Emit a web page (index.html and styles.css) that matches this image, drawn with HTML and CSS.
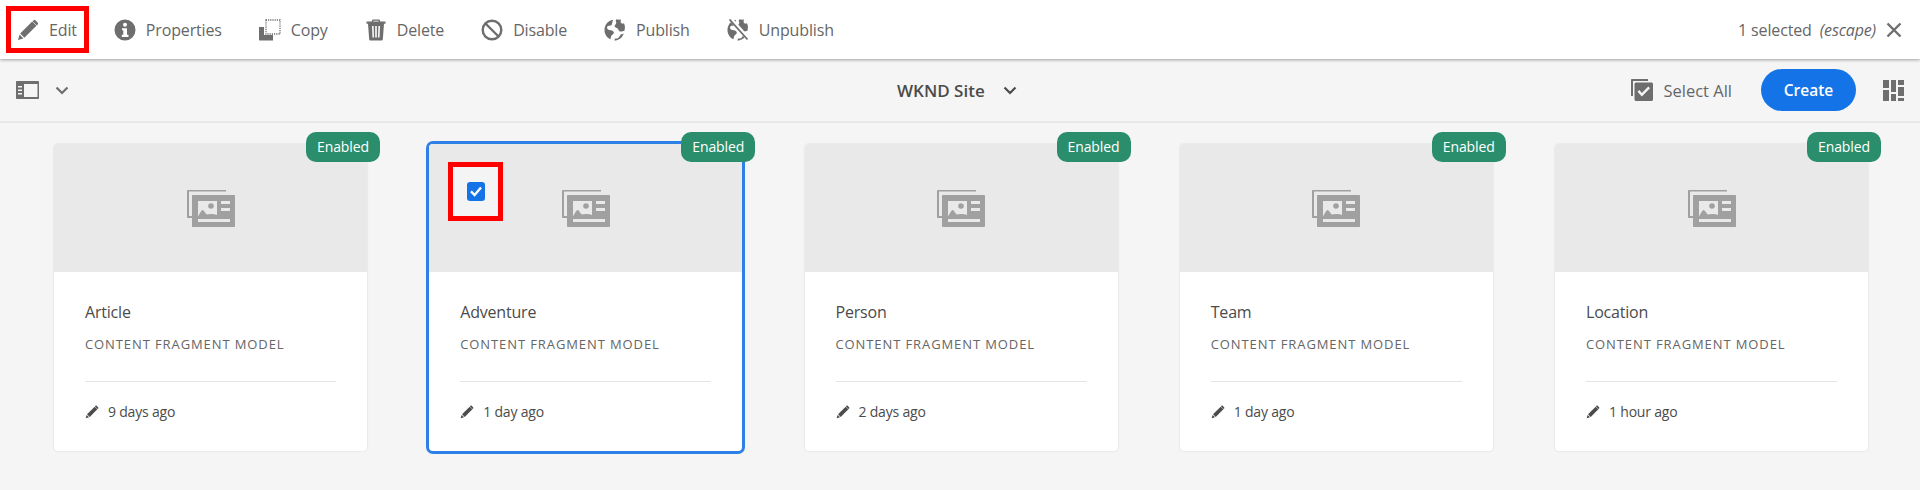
FILE: index.html
```html
<!DOCTYPE html>
<html lang="en">
<head>
    <meta charset="UTF-8">
    <title>Content Fragment Models</title>
    <link rel="stylesheet" href="styles.css">
</head>
<body>
    <svg class="defs" width="0" height="0">
        <symbol id="pencil" viewBox="0 0 22 22">
            <path d="M15.2 2.6 19.4 6.8 7.4 18.8 3.2 14.6Z"/>
            <path d="M16.3 1.5c.7-.7 1.7-.7 2.3-.1l2 2c.6.6.6 1.6-.1 2.3l-.7.7-4.2-4.2Z"/>
            <path d="M2.6 15.6 6.400 19.400 1 21Z"/>
        </symbol>
        <symbol id="card-image" viewBox="0 0 48 37">
            <path d="M1 0H39V1.600H2V26H5V28H1C.4 28 0 27.600 0 27V1C0 .4.4 0 1 0Z"/>
            <path fill-rule="evenodd" d="M6 5H47C47.600 5 48 5.400 48 6V36C48 36.600 47.600 37 47 37H6C5.400 37 5 36.600 5 36V6C5 5.400 5.400 5 6 5ZM11 11V26.500C13 23 14.500 20 15.500 20C17 20 18 23 20 24.500C23 23.500 27 24 30 25V11ZM34 11V14H43V11ZM34 18V21H43V18ZM11 29V32H43V29Z"/>
            <circle cx="24" cy="16" r="2.800" fill="#a0a0a0"/>
        </symbol>
    </svg>

    <div class="action-bar">
        <div class="actions">
            <div class="action action-edit">
                <svg class="icon"><use href="#pencil"/></svg>
                <span>Edit</span>
                <div class="red-box"></div>
            </div>
            <div class="action">
                <svg class="icon" viewBox="0 0 22 22"><path fill-rule="evenodd" d="M11 .5a10.500 10.500 0 1 0 0 21 10.500 10.500 0 0 0 0-21ZM11 3.800a2 2 0 1 1 0 4 2 2 0 0 1 0-4ZM8 9.200H13V15.800H14.500V18H7.800V15.800H9.300V11.200H8Z"/></svg>
                <span>Properties</span>
            </div>
            <div class="action">
                <svg class="icon" viewBox="0 0 22 22">
                    <path d="M0 8H5V16H14V21.500H1C.4 21.500 0 21.100 0 20.500Z"/>
                    <path d="M7 1V15H21V1Z" fill="none" stroke="#6e6e6e" stroke-width="1.300" stroke-dasharray="1.200 1"/>
                </svg>
                <span>Copy</span>
            </div>
            <div class="action">
                <svg class="icon" viewBox="0 0 22 22"><path fill-rule="evenodd" d="M7.500.5H14.500L15.300 2.500H20.500V4.800H19L17.800 20.500C17.700 21.200 17.300 21.500 16.700 21.500H5.300C4.700 21.500 4.300 21.200 4.200 20.500L3 4.800H1.500V2.500H6.700ZM8.500 1.800 8.200 2.500H13.800L13.500 1.800ZM7 7 7.500 18.500H9L8.600 7ZM10.200 7V18.500H11.800V7ZM13.400 7 13 18.500H14.500L15 7Z"/></svg>
                <span>Delete</span>
            </div>
            <div class="action">
                <svg class="icon" viewBox="0 0 22 22"><circle cx="11" cy="11" r="9.300" fill="none" stroke="#6e6e6e" stroke-width="2.400"/><path d="M4.500 4.500 17.500 17.500" stroke="#6e6e6e" stroke-width="2.400"/></svg>
                <span>Disable</span>
            </div>
            <div class="action">
                <svg class="icon" viewBox="0 0 22 22"><path d="M9 .8C4 1.700.5 6 .5 11c0 4 2.300 7.600 5.800 9.300.7-1.300.5-2.700 1.200-3.800.7-1.100 2-1.300 2.300-2.600.2-1.200-.8-2-1.800-2.500C6.500 10.900 4.500 11.300 3.500 10 2.800 9 3 7.800 3.900 7.100 5 6.300 6.300 6.900 7.300 6.200 8.500 5.300 7.800 3.800 8.500 2.700ZM12 .6c-.7 1.200.5 2.300.2 3.600-.2 1.200-1.700 1.700-1.600 3 .1 1.400 2 1.300 3 2.200 1 .9 1.100 2.500 2.400 3 1.500.5 3-.5 4.300-.5.9-2.500.9-5.200-.3-7.700-1.200.8-2.700.5-3.200-.7-.5-1 .2-1.900.1-2.900C15.500 .9 13.800 .5 12 .6ZM19.700 14.700c-1.100-.1-2.300.2-3.100 1-1.200 1-1.300 2.900-2.700 3.500-.9.4-1.800.1-2.700.2-.5.500-.7 1.200-.7 2.100 3.900 0 7.500-2.300 9.200-6.800Z"/></svg>
                <span>Publish</span>
            </div>
            <div class="action">
                <svg class="icon" viewBox="0 0 22 22">
                    <path d="M9 .8C4 1.700.5 6 .5 11c0 4 2.300 7.600 5.800 9.300.7-1.300.5-2.700 1.200-3.800.7-1.100 2-1.300 2.300-2.600.2-1.200-.8-2-1.800-2.500C6.500 10.900 4.500 11.300 3.500 10 2.800 9 3 7.800 3.900 7.100 5 6.300 6.300 6.900 7.300 6.200 8.500 5.300 7.800 3.800 8.500 2.700ZM12 .6c-.7 1.200.5 2.300.2 3.600-.2 1.200-1.700 1.700-1.600 3 .1 1.400 2 1.300 3 2.200 1 .9 1.100 2.500 2.400 3 1.500.5 3-.5 4.300-.5.9-2.500.9-5.200-.3-7.700-1.200.8-2.700.5-3.200-.7-.5-1 .2-1.900.1-2.900C15.500 .9 13.800 .5 12 .6ZM19.700 14.700c-1.100-.1-2.300.2-3.100 1-1.200 1-1.300 2.900-2.700 3.500-.9.4-1.800.1-2.700.2-.5.500-.7 1.200-.7 2.100 3.900 0 7.500-2.300 9.200-6.800Z"/>
                    <path d="M3.500 0 21 19.500" stroke="#fff" stroke-width="4"/>
                    <path d="M2.500 .5 20.500 20.500" stroke="#6e6e6e" stroke-width="1.800"/>
                </svg>
                <span>Unpublish</span>
            </div>
        </div>
        <div class="selection">
            <span>1 selected</span>
            <em>(escape)</em>
            <svg class="close" viewBox="0 0 16 16"><path d="M1.500 1.500 14.500 14.500M14.500 1.500 1.500 14.500" stroke="#6e6e6e" stroke-width="2.400"/></svg>
        </div>
    </div>

    <div class="nav-bar">
        <div class="nav-left">
            <svg class="rail" viewBox="0 0 23 18"><path fill-rule="evenodd" d="M1 0H22C22.600 0 23 .4 23 1V17C23 17.600 22.600 18 22 18H1C.4 18 0 17.600 0 17V1C0 .4.4 0 1 0ZM8 3V16H21.500V3ZM2 5V6.500H6V5ZM2 8.500V10H6V8.500ZM2 12V13.500H6V12Z"/></svg>
            <svg class="chevron" viewBox="0 0 14 9"><path d="M1.500 1.500 7 7 12.500 1.500" fill="none" stroke="#6e6e6e" stroke-width="2.200"/></svg>
        </div>
        <div class="nav-title">
            <strong>WKND Site</strong>
            <svg class="chevron dark" viewBox="0 0 14 9"><path d="M1.500 1.500 7 7 12.500 1.500" fill="none" stroke="#4b4b4b" stroke-width="2.200"/></svg>
        </div>
        <div class="nav-right">
            <div class="select-all">
                <svg class="icon" viewBox="0 0 22 22">
                    <path d="M1 0H17V2H2V17H0V1C0 .4.4 0 1 0Z"/>
                    <path fill-rule="evenodd" d="M5 3.500H20.500C21.300 3.500 22 4.200 22 5V20.500C22 21.300 21.300 22 20.500 22H5C4.200 22 3.500 21.300 3.500 20.500V5C3.500 4.200 4.200 3.500 5 3.500ZM6.500 12.700 10.800 17.500 19 9.200 17.300 7.600 10.900 14 8.300 11Z"/>
                </svg>
                <span>Select All</span>
            </div>
            <button class="create">Create</button>
            <svg class="view" viewBox="0 0 21 21"><path d="M0 0H6V8H0ZM0 10H6V21H0ZM8 0H13V12H8ZM8 14H13V21H8ZM15 0H21V5H15ZM15 7H21V16H15ZM15 18H21V21H15Z"/></svg>
        </div>
    </div>

    <div class="cards">
        <div class="card">
            <div class="badge">Enabled</div>
            <div class="thumb"><svg class="thumb-icon"><use href="#card-image"/></svg></div>
            <div class="info">
                <div class="title">Article</div>
                <div class="type">Content Fragment Model</div>
                <div class="meta"><svg class="pencil-small"><use href="#pencil"/></svg>9 days ago</div>
            </div>
        </div>
        <div class="card selected">
            <div class="badge">Enabled</div>
            <div class="thumb">
                <svg class="thumb-icon"><use href="#card-image"/></svg>
                <div class="check-box">
                    <div class="check"><svg viewBox="0 0 18 18"><path d="M4 9.300 7.600 13 14 5.500" fill="none" stroke="#fff" stroke-width="2.400"/></svg></div>
                </div>
            </div>
            <div class="info">
                <div class="title">Adventure</div>
                <div class="type">Content Fragment Model</div>
                <div class="meta"><svg class="pencil-small"><use href="#pencil"/></svg>1 day ago</div>
            </div>
        </div>
        <div class="card">
            <div class="badge">Enabled</div>
            <div class="thumb"><svg class="thumb-icon"><use href="#card-image"/></svg></div>
            <div class="info">
                <div class="title">Person</div>
                <div class="type">Content Fragment Model</div>
                <div class="meta"><svg class="pencil-small"><use href="#pencil"/></svg>2 days ago</div>
            </div>
        </div>
        <div class="card">
            <div class="badge">Enabled</div>
            <div class="thumb"><svg class="thumb-icon"><use href="#card-image"/></svg></div>
            <div class="info">
                <div class="title">Team</div>
                <div class="type">Content Fragment Model</div>
                <div class="meta"><svg class="pencil-small"><use href="#pencil"/></svg>1 day ago</div>
            </div>
        </div>
        <div class="card">
            <div class="badge">Enabled</div>
            <div class="thumb"><svg class="thumb-icon"><use href="#card-image"/></svg></div>
            <div class="info">
                <div class="title">Location</div>
                <div class="type">Content Fragment Model</div>
                <div class="meta"><svg class="pencil-small"><use href="#pencil"/></svg>1 hour ago</div>
            </div>
        </div>
    </div>
</body>
</html>
```

FILE: styles.css
```css
* {
    box-sizing: border-box;
}
body {
    margin: 0;
    height: 490px;
    overflow: hidden;
    background-color: #f5f5f5;
    font-family: "Open Sans", "Noto Sans", sans-serif;
    color: #666;
}
.defs {
    position: absolute;
}
svg {
    display: block;
    fill: #6e6e6e;
}
.action-bar {
    position: relative;
    z-index: 2;
    height: 59px;
    padding: 0 18px 0 17px;
    display: flex;
    align-items: center;
    justify-content: space-between;
    background-color: #fff;
    box-shadow: 0 1px 3px rgba(0, 0, 0, 0.35);
}
.actions {
    display: flex;
    align-items: center;
    gap: 37px;
}
.action {
    position: relative;
    display: flex;
    align-items: center;
    gap: 10px;
    font-size: 16px;
    letter-spacing: -0.15px;
}
.icon {
    width: 22px;
    height: 22px;
}
.red-box {
    position: absolute;
    left: -11px;
    top: -13px;
    width: 83px;
    height: 47px;
    border: 5px solid #f00;
}
.selection {
    display: flex;
    align-items: center;
    font-size: 16px;
    letter-spacing: -0.15px;
}
.selection em {
    margin-left: 8px;
}
.close {
    width: 16px;
    height: 16px;
    margin-left: 10px;
}
.nav-bar {
    position: relative;
    height: 64px;
    padding: 0 16px;
    display: flex;
    align-items: center;
    justify-content: space-between;
    border-bottom: 2px solid #e8e8e8;
}
.nav-left {
    display: flex;
    align-items: center;
    gap: 16px;
}
.rail {
    width: 23px;
    height: 18px;
}
.chevron {
    width: 14px;
    height: 9px;
}
.nav-title {
    position: absolute;
    left: 897px;
    top: 0;
    height: 62px;
    display: flex;
    align-items: center;
    gap: 18px;
    font-size: 17px;
    color: #4b4b4b;
}
.nav-title strong {
    font-weight: 600;
}
.nav-right {
    display: flex;
    align-items: center;
}
.select-all {
    display: flex;
    align-items: center;
    gap: 10px;
    font-size: 16.5px;
    margin-right: 29px;
}
.create {
    width: 95px;
    height: 42px;
    border: none;
    border-radius: 21px;
    background-color: #1473e6;
    color: #fff;
    font-family: inherit;
    font-size: 15.5px;
    font-weight: 600;
}
.view {
    width: 21px;
    height: 21px;
    margin-left: 27px;
}
.cards {
    padding: 21px 52px 0 54px;
    display: flex;
    justify-content: space-between;
}
.card {
    position: relative;
    width: 313px;
    height: 307px;
    border-radius: 4px;
    background-color: #fff;
    box-shadow: 0 0 2px rgba(0, 0, 0, 0.15);
}
.card.selected {
    box-shadow: 0 0 0 3px #2d80e6;
}
.badge {
    position: absolute;
    z-index: 1;
    top: -12px;
    right: -13px;
    width: 74px;
    height: 30px;
    border-radius: 10px;
    background-color: #2a8e6c;
    color: #fff;
    font-size: 14px;
    letter-spacing: -0.1px;
    line-height: 29px;
    text-align: center;
}
.thumb {
    position: relative;
    height: 128px;
    display: flex;
    justify-content: center;
    padding-top: 46px;
    border-radius: 4px 4px 0 0;
    background-color: #e9e9e9;
}
.thumb-icon {
    width: 48px;
    height: 37px;
    fill: #a0a0a0;
}
.check-box {
    position: absolute;
    left: 19px;
    top: 18px;
    width: 55px;
    height: 59px;
    display: flex;
    align-items: center;
    justify-content: center;
    border: 5px solid #f00;
    background-color: #f4f4f4;
}
.check {
    width: 18px;
    height: 19px;
    border-radius: 3px;
    background-color: #1473e6;
}
.info {
    padding: 29px 31px 0 31px;
}
.title {
    font-size: 16px;
    line-height: 22px;
    letter-spacing: -0.2px;
    color: #4b4b4b;
}
.type {
    margin-top: 13px;
    padding-bottom: 28px;
    border-bottom: 1px solid #e4e4e4;
    font-size: 13px;
    line-height: 17px;
    letter-spacing: 0.9px;
    text-transform: uppercase;
}
.meta {
    margin-top: 21px;
    display: flex;
    align-items: center;
    gap: 9px;
    font-size: 14px;
    line-height: 18px;
    letter-spacing: -0.2px;
    color: #4b4b4b;
}
.pencil-small {
    width: 14px;
    height: 14px;
    fill: #4b4b4b;
}
```
